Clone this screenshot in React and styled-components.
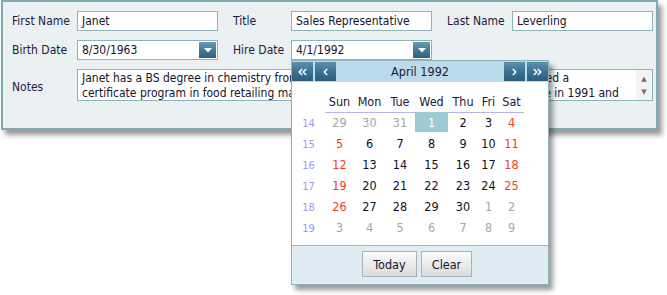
import styled, { createGlobalStyle } from "styled-components";

const GlobalStyle = createGlobalStyle`
  html, body {
    margin: 0;
    padding: 0;
    background: #ffffff;
  }

  body {
    font-family: "DejaVu Sans Condensed", "DejaVu Sans", sans-serif;
    color: #1a1a3a;
  }
`;

const weeks = [
  { num: 14, days: [[29, "other"], [30, "other"], [31, "other"], [1, "selected"], [2], [3], [4, "weekend"]] },
  { num: 15, days: [[5, "weekend"], [6], [7], [8], [9], [10], [11, "weekend"]] },
  { num: 16, days: [[12, "weekend"], [13], [14], [15], [16], [17], [18, "weekend"]] },
  { num: 17, days: [[19, "weekend"], [20], [21], [22], [23], [24], [25, "weekend"]] },
  { num: 18, days: [[26, "weekend"], [27], [28], [29], [30], [1, "other"], [2, "other"]] },
  { num: 19, days: [[3, "other"], [4, "other"], [5, "other"], [6, "other"], [7, "other"], [8, "other"], [9, "other"]] },
];

const dayNames = ["Sun", "Mon", "Tue", "Wed", "Thu", "Fri", "Sat"];

function DropArrow() {
  return (
    <svg width="8" height="5" viewBox="0 0 8 5">
      <path d="M0 0 H8 L4 4.5 Z" fill="#ffffff" />
    </svg>
  );
}

// chevrons for the month navigation, dir -1 = back, 1 = forward
function Chevrons({ dir, count }) {
  const offsets = count === 2 ? [0, 4] : [2];
  return (
    <svg width="10" height="8" viewBox="0 0 10 8">
      {offsets.map((o) => (
        <polyline
          key={o}
          points={dir < 0 ? `${o + 4.2},1 ${o + 1.2},4 ${o + 4.2},7` : `${o + 1.8},1 ${o + 4.8},4 ${o + 1.8},7`}
          fill="none"
          stroke="#ffffff"
          strokeWidth="1.5"
        />
      ))}
    </svg>
  );
}

function App() {
  return (
    <Page>
      <GlobalStyle />
      <Panel>
        <Form>
          <Label>First Name</Label>
          <Input>Janet</Input>
          <Label $indent>Title</Label>
          <Input>Sales Representative</Input>
          <Label $indent>Last Name</Label>
          <Input>Leverling</Input>

          <Label>Birth Date</Label>
          <Input>
            8/30/1963
            <DropButton>
              <DropArrow />
            </DropButton>
          </Input>
          <Label $indent>Hire Date</Label>
          <DateCell>
            <Input>
              4/1/1992
              <DropButton>
                <DropArrow />
              </DropButton>
            </Input>
            <Popup>
              <CalHeader>
                <NavGroup>
                  <NavButton>
                    <Chevrons dir={-1} count={2} />
                  </NavButton>
                  <NavButton>
                    <Chevrons dir={-1} count={1} />
                  </NavButton>
                </NavGroup>
                <MonthTitle>April 1992</MonthTitle>
                <NavGroup>
                  <NavButton>
                    <Chevrons dir={1} count={1} />
                  </NavButton>
                  <NavButton>
                    <Chevrons dir={1} count={2} />
                  </NavButton>
                </NavGroup>
              </CalHeader>
              <CalBody>
                <WeekNum $head />
                {dayNames.map((d) => (
                  <DayName key={d}>{d}</DayName>
                ))}
                {weeks.map((w) => (
                  <Week key={w.num}>
                    <WeekNum>{w.num}</WeekNum>
                    {w.days.map(([n, kind], i) => (
                      <Day key={i} $kind={kind}>
                        {n}
                      </Day>
                    ))}
                  </Week>
                ))}
              </CalBody>
              <CalFooter>
                <FooterButton $w={55}>Today</FooterButton>
                <FooterButton $w={51}>Clear</FooterButton>
              </CalFooter>
            </Popup>
          </DateCell>
          <span />
          <span />

          <Label $tall>Notes</Label>
          <Notes>
            <NotesText>
              Janet has a BS degree in chemistry from Boston College (1984). She has also completed a
              <br />
              certificate program in food retailing management. Janet was hired as a sales associate in 1991 and
            </NotesText>
            <ScrollBar>
              <span>▲</span>
              <span>▼</span>
            </ScrollBar>
          </Notes>
        </Form>
      </Panel>
    </Page>
  );
}

export default App;

const Page = styled.div`
  min-height: 295px;
`;

const Panel = styled.div`
  box-sizing: border-box;
  width: 657px;
  height: 130px;
  margin-left: 1px;
  background-color: #ebf0f3;
  border: 2px solid #7eaab1;
  box-shadow: 4px 5px 5px rgba(0, 0, 0, 0.4);
`;

const Form = styled.div`
  display: grid;
  grid-template-columns: 65px 141px 73px 141px 80px 141px;
  grid-template-rows: 20px 20px 32px;
  row-gap: 9px;
  padding: 9px 0 0 9px;
  font-size: 12px;
`;

const Label = styled.div`
  display: flex;
  align-items: center;
  padding-left: ${(props) => (props.$indent ? "15px" : "0")};
  color: #1c1c40;
  margin-top: ${(props) => (props.$tall ? "3px" : "0")};
`;

const Input = styled.div`
  position: relative;
  box-sizing: border-box;
  height: 20px;
  display: flex;
  align-items: center;
  padding-left: 4px;
  background: #ffffff;
  border: 1px solid #8db4ba;
  color: #14142e;
`;

const DropButton = styled.div`
  position: absolute;
  right: 1px;
  top: 1px;
  width: 17px;
  height: 16px;
  display: flex;
  align-items: center;
  justify-content: center;
  background: linear-gradient(#6a9ab4, #44799a 50%, #2d6282);
`;

const DateCell = styled.div`
  position: relative;
`;

const Popup = styled.div`
  position: absolute;
  left: 0;
  top: 20px;
  z-index: 2;
  box-sizing: border-box;
  width: 258px;
  background: #ffffff;
  border: 1px solid #8fb2b9;
  box-shadow: 4px 5px 5px rgba(0, 0, 0, 0.4);
`;

const CalHeader = styled.div`
  display: flex;
  align-items: center;
  justify-content: space-between;
  height: 21px;
  background: #bcdbea;
`;

const NavGroup = styled.div`
  display: flex;
  gap: 2px;
`;

const NavButton = styled.div`
  width: 21px;
  height: 19px;
  display: flex;
  align-items: center;
  justify-content: center;
  background: linear-gradient(#5c91ae, #3b7192 50%, #285d7c);
`;

const MonthTitle = styled.div`
  font-size: 12.5px;
  color: #1a1a3a;
`;

const CalBody = styled.div`
  display: grid;
  grid-template-columns: 33px 29px 31px 30px 33px 30px 21px 25px;
  grid-auto-rows: 21px;
  padding: 8px 0 8px 0;
  font-size: 12.5px;
`;

const Week = styled.div`
  display: contents;
`;

const DayName = styled.div`
  height: 22px;
  display: flex;
  align-items: center;
  justify-content: center;
  border-bottom: 1px solid #b6b4f0;
  color: #1a1a3a;
`;

const WeekNum = styled.div`
  height: ${(props) => (props.$head ? "22px" : "auto")};
  display: flex;
  align-items: center;
  justify-content: center;
  padding-top: 4px;
  font-size: 11px;
  color: #9b98f2;
`;

const dayColor = {
  other: "#a6a6a6",
  weekend: "#f0401e",
  selected: "#ffffff",
};

const Day = styled.div`
  display: flex;
  align-items: center;
  justify-content: center;
  margin-top: 1px;
  color: ${(props) => dayColor[props.$kind] || "#101024"};
  background: ${(props) => (props.$kind === "selected" ? "#9ccbd3" : "transparent")};
`;

const CalFooter = styled.div`
  display: flex;
  justify-content: center;
  gap: 4px;
  padding: 5px 6px 7px 0;
  background: #dfecf4;
  border-top: 1px solid #9ab9c2;
`;

const FooterButton = styled.div`
  box-sizing: border-box;
  width: ${(props) => props.$w}px;
  height: 26px;
  display: flex;
  align-items: center;
  justify-content: center;
  font-size: 12.5px;
  color: #14142e;
  border: 1px solid #a9b3b7;
  background: linear-gradient(#fbfbfb, #ececec 50%, #dadada);
`;

const Notes = styled.div`
  grid-column: 2 / 7;
  box-sizing: border-box;
  display: flex;
  background: #ffffff;
  border: 1px solid #8db4ba;
  overflow: hidden;
`;

const NotesText = styled.div`
  flex: 1;
  padding: 1px 4px;
  line-height: 15px;
  white-space: nowrap;
  overflow: hidden;
  color: #14142e;
`;

const ScrollBar = styled.div`
  width: 16px;
  display: flex;
  flex-direction: column;
  justify-content: space-between;
  align-items: center;
  padding: 5px 0 4px;
  background: #f4f4f4;
  font-family: "DejaVu Sans", sans-serif;
  font-size: 7px;
  color: #6e6e6e;
`;
